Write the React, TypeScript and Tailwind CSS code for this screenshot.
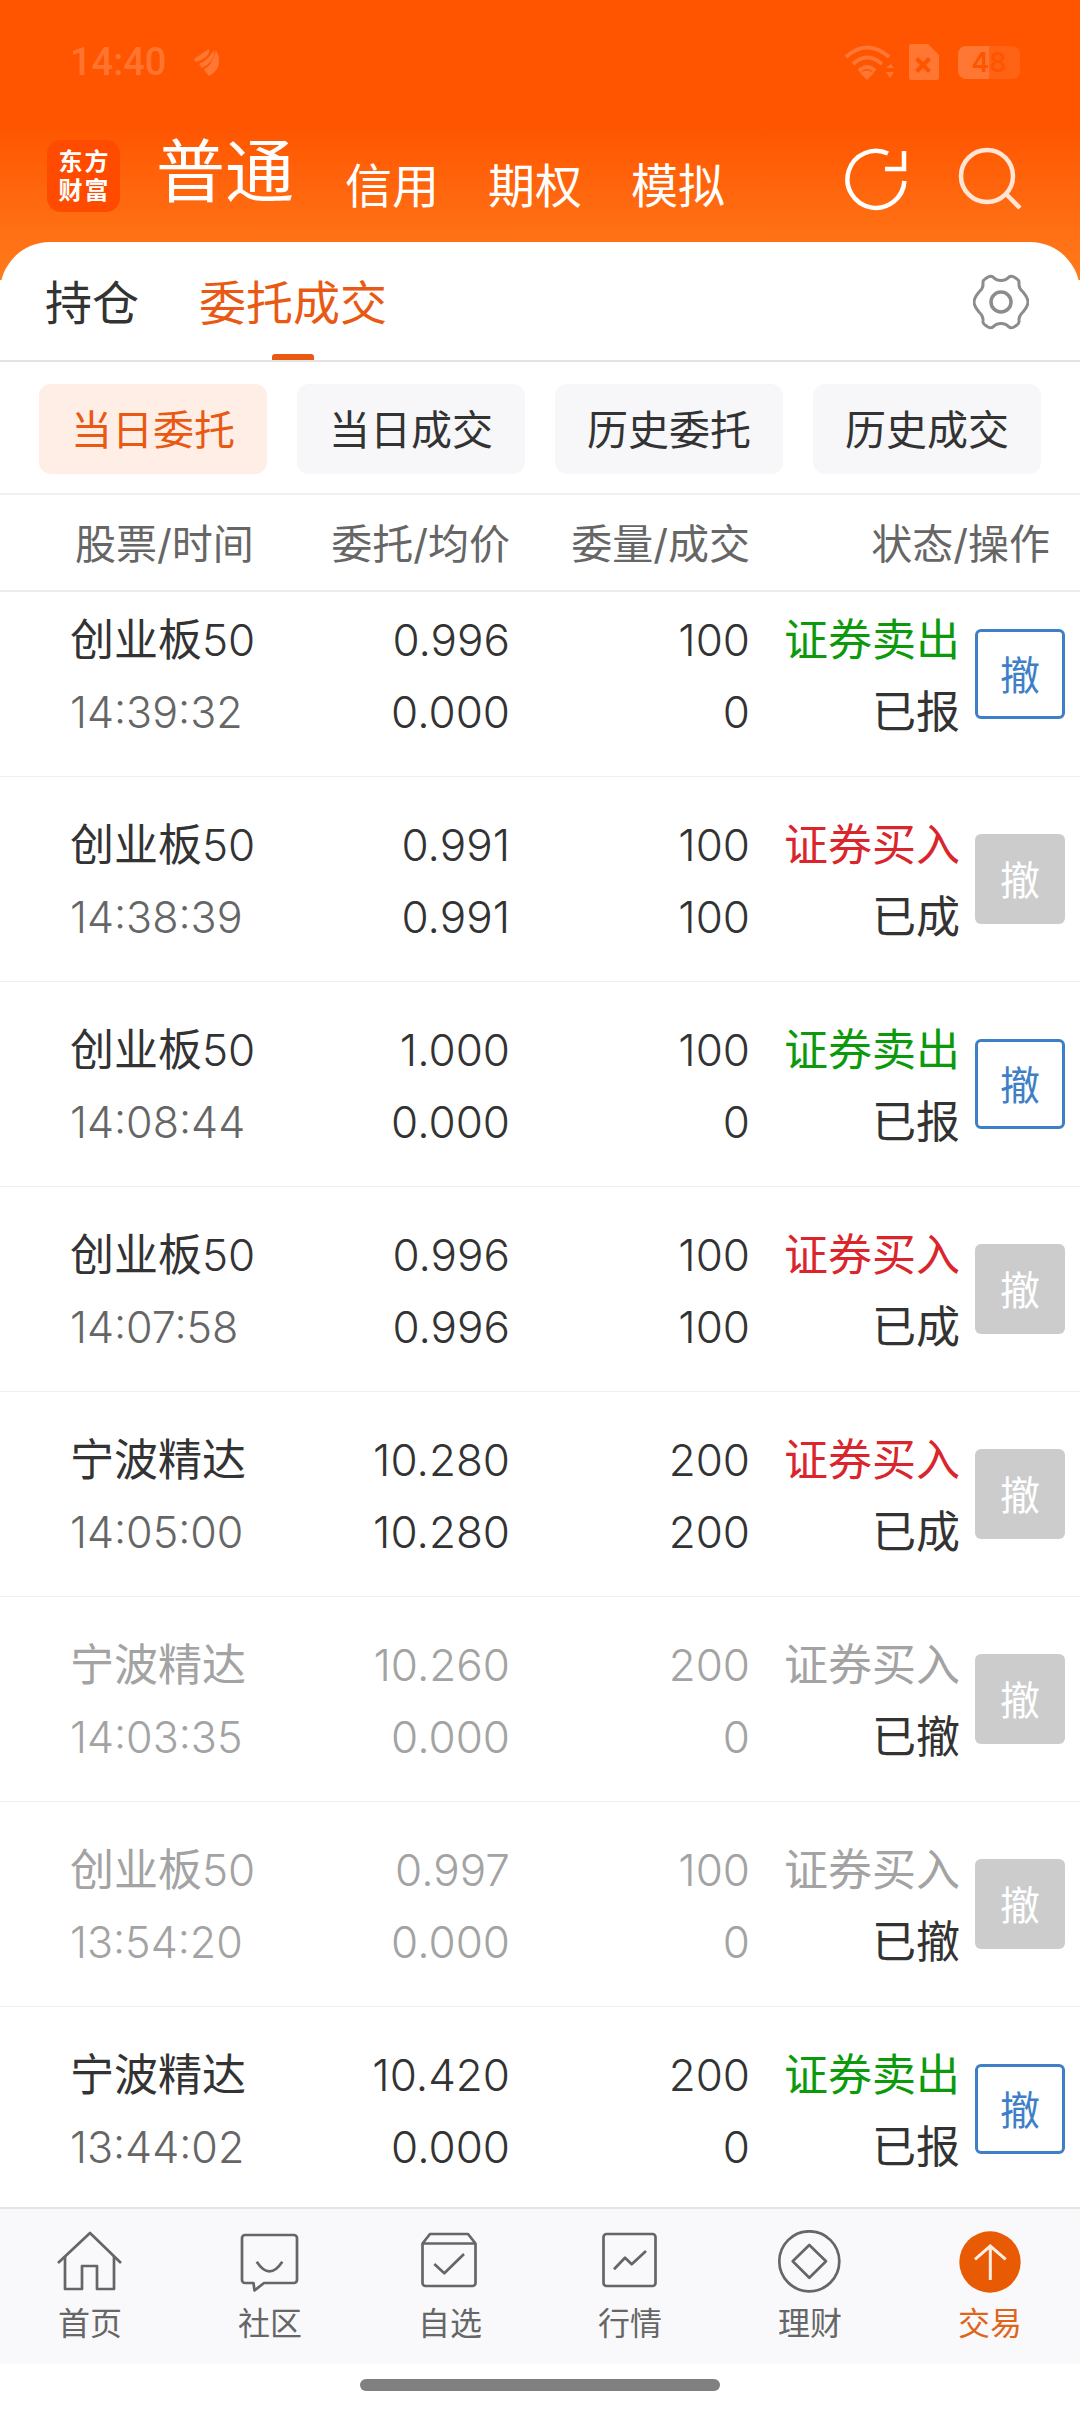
import React from 'react';

const FONT = "font-['Inter','Noto_Sans_CJK_SC',sans-serif]";

const GREEN = 'text-[#0c9a0c]';
const RED = 'text-[#d9252b]';
const GREY = 'text-[#a3a3a3]';

type Order = {
  name: string;
  suffix?: string;
  time: string;
  price: string;
  avg: string;
  qty: string;
  deal: string;
  side: string;
  sideColor: string;
  status: string;
  active: boolean;
  dim?: boolean;
};

const ORDERS: Order[] = [
  { name: '创业板', suffix: '50', time: '14:39:32', price: '0.996', avg: '0.000', qty: '100', deal: '0', side: '证券卖出', sideColor: GREEN, status: '已报', active: true },
  { name: '创业板', suffix: '50', time: '14:38:39', price: '0.991', avg: '0.991', qty: '100', deal: '100', side: '证券买入', sideColor: RED, status: '已成', active: false },
  { name: '创业板', suffix: '50', time: '14:08:44', price: '1.000', avg: '0.000', qty: '100', deal: '0', side: '证券卖出', sideColor: GREEN, status: '已报', active: true },
  { name: '创业板', suffix: '50', time: '14:07:58', price: '0.996', avg: '0.996', qty: '100', deal: '100', side: '证券买入', sideColor: RED, status: '已成', active: false },
  { name: '宁波精达', time: '14:05:00', price: '10.280', avg: '10.280', qty: '200', deal: '200', side: '证券买入', sideColor: RED, status: '已成', active: false },
  { name: '宁波精达', time: '14:03:35', price: '10.260', avg: '0.000', qty: '200', deal: '0', side: '证券买入', sideColor: GREY, status: '已撤', active: false, dim: true },
  { name: '创业板', suffix: '50', time: '13:54:20', price: '0.997', avg: '0.000', qty: '100', deal: '0', side: '证券买入', sideColor: GREY, status: '已撤', active: false, dim: true },
  { name: '宁波精达', time: '13:44:02', price: '10.420', avg: '0.000', qty: '200', deal: '0', side: '证券卖出', sideColor: GREEN, status: '已报', active: true },
];

const OrderRow: React.FC<{ order: Order; clipped?: boolean }> = ({ order, clipped }) => {
  const main = order.dim ? GREY : 'text-[#333333]';
  const sub = order.dim ? GREY : 'text-[#666666]';
  return (
    <div className={`flex items-center border-b border-[#efefef] pl-[70px] pr-[15px] leading-[72px] ${clipped ? 'h-[185px] pb-[20px]' : 'h-[205px]'}`}>
      <div className="mt-[3px] w-[220px]">
        <div className={`text-[44px] ${main}`}>
          {order.name}
          <span className="font-light">{order.suffix}</span>
        </div>
        <div className={`text-[43px] font-light ${sub}`}>{order.time}</div>
      </div>
      <div className="mt-[3px] w-[220px] text-right text-[44px] font-light">
        <div className={main}>{order.price}</div>
        <div className={main}>{order.avg}</div>
      </div>
      <div className="mt-[3px] w-[240px] text-right text-[44px] font-light">
        <div className={main}>{order.qty}</div>
        <div className={main}>{order.deal}</div>
      </div>
      <div className="mt-[3px] w-[210px] text-right text-[44px]">
        <div className={order.sideColor}>{order.side}</div>
        <div className="text-[#333333]">{order.status}</div>
      </div>
      <div className="ml-[15px]">
        <div className={`flex h-[90px] w-[90px] items-center justify-center rounded-[6px] pt-[3px] text-[40px] ${order.active ? 'border-[3px] border-[#3f7fc8] text-[#3f7fc8]' : 'bg-[#cccccc] text-white'}`}>撤</div>
      </div>
    </div>
  );
};

const NavIcon: React.FC<{ name: string }> = ({ name }) => {
  const common = { width: 80, height: 66, viewBox: '0 0 80 66', fill: 'none', stroke: '#666666', strokeWidth: 2.7, strokeLinejoin: 'round' as const };
  if (name === 'home') {
    return (
      <svg {...common}>
        <path d="M8 33 L40 3 L71 33" />
        <path d="M15 26 V59 H32 V36 H47 V59 H64 V26" />
      </svg>
    );
  }
  if (name === 'chat') {
    return (
      <svg {...common}>
        <path d="M15 5 H64 A3 3 0 0 1 67 8 V50 A3 3 0 0 1 64 53 H34 L24.5 60.5 L23.5 53 H15 A3 3 0 0 1 12 50 V8 A3 3 0 0 1 15 5 Z" />
        <path d="M26.7 31.7 Q39.5 51 52.3 31.7" />
      </svg>
    );
  }
  if (name === 'star') {
    return (
      <svg {...common}>
        <path d="M12.5 13.5 L20 4 H58 L65.5 13.5 V53 A3 3 0 0 1 62.5 56 H15.5 A3 3 0 0 1 12.5 53 Z M12.5 13.5 H65.5" />
        <path d="M24.3 34 L34.3 43.3 L54 24" />
      </svg>
    );
  }
  if (name === 'chart') {
    return (
      <svg {...common}>
        <rect x="13.5" y="4" width="52" height="52" rx="3" />
        <path d="M24 39.3 L35 27.7 L41.7 34.3 L56 21" />
      </svg>
    );
  }
  if (name === 'money') {
    return (
      <svg {...common}>
        <circle cx="39.3" cy="31.3" r="30" />
        <path d="M39.3 15 L56 31.3 L39.3 47.7 L22.7 31.3 Z" />
      </svg>
    );
  }
  return (
    <svg width="80" height="66" viewBox="0 0 80 66" fill="none">
      <circle cx="40" cy="32" r="30.7" fill="#e85a04" />
      <path d="M40.3 50 V17 M25 29.3 L40.3 16 L55.7 29.3" stroke="#ffeee2" strokeWidth="3" />
    </svg>
  );
};

const NAV = [
  { label: '首页', icon: 'home' },
  { label: '社区', icon: 'chat' },
  { label: '自选', icon: 'star' },
  { label: '行情', icon: 'chart' },
  { label: '理财', icon: 'money' },
  { label: '交易', icon: 'trade' },
];

const FILTERS = ['当日委托', '当日成交', '历史委托', '历史成交'];

export default function App() {
  return (
    <div className={`flex h-[2412px] w-[1080px] flex-col overflow-hidden bg-white ${FONT}`}>
      <div className="h-[280px] shrink-0 bg-gradient-to-b from-[#ff5500] from-[45%] to-[#ff7a1a]">
        <div className="flex h-[124px] items-center pl-[70px] pr-[60px] text-white/20">
          <span className="font-['Roboto'] text-[38px] font-medium">14:40</span>
          <svg className="ml-[28px]" width="26" height="30" viewBox="0 0 26 30" fill="currentColor">
            <path d="M0 12 L15 2 Q16 6 12 10 Q7 14 2 15 Z" />
            <path d="M5 17 Q14 13 20 3 Q21 9 17 14 Q13 19 8 21 Z" />
            <path d="M15 29 Q11 25 10 22 Q18 19 22 3 Q27 12 24 20 Q21 26 15 29 Z" />
          </svg>
          <div className="ml-auto flex items-center">
            <svg width="50" height="36" viewBox="0 0 50 36" fill="none" stroke="currentColor" strokeWidth="4">
              <path d="M2 13 Q23 -6 45 13 M9 20 Q23 7 38 20 M15 27 Q23 19 31 27" />
              <path d="M23 36 L16 29 Q23 24 30 29 Z" fill="currentColor" stroke="none" />
              <path d="M42 24 L47 20 L50 24 Z M42 28 L50 28 L46 34 Z" fill="currentColor" stroke="none" />
            </svg>
            <svg className="ml-[15px]" width="30" height="36" viewBox="0 0 30 36" fill="currentColor">
              <path fillRule="evenodd" d="M2 0 H19 L30 11 V34 A2 2 0 0 1 28 36 H2 A2 2 0 0 1 0 34 V2 A2 2 0 0 1 2 0 Z M9 13 L6 16 L11 21 L6 26 L9 29 L14 24 L19 29 L22 26 L17 21 L22 16 L19 13 L14 18 Z" />
            </svg>
            <div className="ml-[19px] flex h-[33px] w-[62px] items-center justify-center rounded-[8px] bg-gradient-to-r from-white/20 from-50% to-white/8 to-50% text-[27px] font-semibold leading-[33px] text-[#ff5500]">48</div>
          </div>
        </div>
        <div className="flex items-end pl-[47px] pr-[57px] text-white">
          <div className="mb-[12px] grid h-[72px] w-[73px] grid-cols-[26px_26px] grid-rows-[29px_29px] content-center justify-center rounded-[14px] bg-[#ff4b00] text-center text-[24px] font-bold leading-[29px]">
            <span>东</span><span>方</span><span>财</span><span>富</span>
          </div>
          <span className="ml-[36px] mb-[4px] text-[69px] leading-[96px]">普通</span>
          <span className="ml-[51px] mb-[8px] text-[47px] leading-[60px]">信用</span>
          <span className="ml-[49px] mb-[8px] text-[47px] leading-[60px]">期权</span>
          <span className="ml-[49px] mb-[8px] text-[47px] leading-[60px]">模拟</span>
          <div className="mb-[11px] ml-auto flex items-center gap-[47px]">
            <svg width="64" height="64" viewBox="0 0 64 64" fill="none" stroke="#ffffff" strokeWidth="4.5">
              <path d="M44 6.5 A28.5 28.5 0 1 0 60.4 34" />
              <path d="M60 4 V22 H41" />
            </svg>
            <svg width="68" height="68" viewBox="0 0 68 68" fill="none" stroke="#ffe5d5" strokeWidth="4.5">
              <circle cx="32" cy="31" r="26" />
              <path d="M52 50 L65 63" />
            </svg>
          </div>
        </div>
      </div>

      <div className="-mt-[38px] flex min-h-0 flex-1 flex-col rounded-t-[50px] bg-white">
        <div className="relative flex h-[120px] shrink-0 items-center border-b-2 border-[#e2e2e2] pl-[45px] pr-[51px] text-[47px]">
          <span className="mt-[4px] text-[#333333]">持仓</span>
          <span className="ml-[60px] mt-[4px] text-[#e85a14]">委托成交</span>
          <div className="absolute bottom-0 left-[272px] h-[6px] w-[42px] rounded-t-[3px] bg-[#e85a14]" />
          <svg className="ml-auto mt-[2px]" width="56" height="56" viewBox="0 0 56 56" fill="none" stroke="#8c8c8c" strokeWidth="3">
            <path d="M28 6.5 Q33 6.5 36 3 Q38 1.5 41 3 L44 5 Q46.5 6.5 46 9.5 Q45.5 14 50 18 Q55 24 55 28 Q55 32 50 38 Q45.5 42 46 46.5 Q46.5 49.5 44 51 L41 53 Q38 54.5 36 53 Q33 49.5 28 49.5 Q23 49.5 20 53 Q18 54.5 15 53 L12 51 Q9.5 49.5 10 46.5 Q10.5 42 6 38 Q1 32 1 28 Q1 24 6 18 Q10.5 14 10 9.5 Q9.5 6.5 12 5 L15 3 Q18 1.5 20 3 Q23 6.5 28 6.5 Z" />
            <circle cx="28" cy="28" r="10" strokeWidth="3.5" />
          </svg>
        </div>
        <div className="flex h-[133px] shrink-0 items-start justify-between border-b-2 border-[#f1f1f1] px-[39px] pt-[22px]">
          {FILTERS.map((item, i) => (
            <div
              key={item}
              className={`flex h-[90px] w-[228px] items-center justify-center rounded-[12px] pt-[4px] text-[41px] ${i === 0 ? 'bg-[#ffeee6] text-[#e85a14]' : 'bg-[#f7f7f9] text-[#333333]'}`}
            >
              {item}
            </div>
          ))}
        </div>
        <div className="flex h-[97px] shrink-0 items-center border-b-2 border-[#ececec] pl-[75px] pr-[30px] pt-[4px] text-[41px] text-[#666666]">
          <div className="w-[200px]">股票/时间</div>
          <div className="w-[235px] text-right">委托/均价</div>
          <div className="w-[240px] text-right">委量/成交</div>
          <div className="flex-1 text-right">状态/操作</div>
        </div>
        <div className="min-h-0 flex-1 overflow-hidden">
          {ORDERS.map((order, i) => (
            <OrderRow key={order.time} order={order} clipped={i === 0} />
          ))}
        </div>
        <div className="flex h-[157px] shrink-0 border-t-2 border-[#e5e5e5] bg-[#f9f9fb] pt-[21px]">
          {NAV.map((item) => (
            <div key={item.label} className="flex flex-1 flex-col items-center">
              <NavIcon name={item.icon} />
              <span className={`mt-[6px] text-[32px] leading-[44px] ${item.icon === 'trade' ? 'text-[#e0651c]' : 'text-[#666666]'}`}>{item.label}</span>
            </div>
          ))}
        </div>
        <div className="flex h-[48px] shrink-0 items-start justify-center pt-[15px]">
          <div className="h-[12px] w-[360px] rounded-full bg-[#808080]" />
        </div>
      </div>
    </div>
  );
}
